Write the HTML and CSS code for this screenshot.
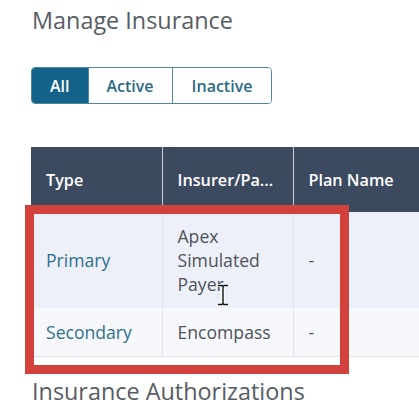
FILE: index.html
```html
<!DOCTYPE html>
<html>
<head>
<meta charset="utf-8">
<link rel="stylesheet" href="styles.css">
</head>
<body>
<div class="page">
  <h1 class="title">Manage Insurance</h1>
  <div class="toggle">
    <span class="seg seg-active">All</span>
    <span class="seg">Active</span>
    <span class="seg">Inactive</span>
  </div>
  <div class="table-wrap">
    <table class="grid">
      <thead>
        <tr>
          <th class="c1">Type</th>
          <th class="c2">Insurer/Pa...</th>
          <th class="c3">Plan Name</th>
        </tr>
      </thead>
      <tbody>
        <tr class="r1">
          <td class="link">Primary</td>
          <td>Apex<br>Simulated<br>Payer</td>
          <td>-</td>
        </tr>
        <tr class="r2">
          <td class="link">Secondary</td>
          <td>Encompass</td>
          <td>-</td>
        </tr>
      </tbody>
    </table>
    <div class="annot"></div>
    <svg class="cursor" width="14" height="22" viewBox="0 0 14 22">
      <path d="M2 1.5h4l1 1 1-1h4M7 2.5v17M2 20.5h4l1-1 1 1h4" fill="none" stroke="#fff" stroke-width="3.2"/>
      <path d="M2 1.5h4l1 1 1-1h4M7 2.5v17M2 20.5h4l1-1 1 1h4" fill="none" stroke="#111" stroke-width="1.4"/>
    </svg>
  </div>
  <h2 class="title sub">Insurance Authorizations</h2>
</div>
</body>
</html>
```
FILE: styles.css
```css
html, body {
  margin: 0;
  padding: 0;
  background: #ffffff;
  overflow: hidden;
}
.page {
  width: 419px;
  height: 415px;
  padding-left: 31px;
  box-sizing: border-box;
  font-family: "Open Sans", "Liberation Sans", sans-serif;
  overflow: hidden;
}
.title {
  margin: 0;
  padding-top: 4px;
  font-size: 23.4px;
  line-height: 32px;
  font-weight: 400;
  color: #575c64;
  padding-left: 1px;
}
.sub {
  padding-top: 0;
  margin-top: 18px;
}
.toggle {
  display: inline-flex;
  margin-top: 31px;
  border: 1px solid #4f87a1;
  border-radius: 4px;
  overflow: hidden;
  height: 37px;
  box-sizing: border-box;
}
.seg {
  display: flex;
  align-items: center;
  padding: 0 18px;
  font-size: 16px;
  font-weight: 600;
  color: #2c6a89;
  background: #fff;
  border-left: 1px solid #4f87a1;
}
.seg:first-child { border-left: none; }
.seg:last-child { padding: 0 19px; }
.seg-active {
  background: #13628a;
  color: #ffffff;
}
.table-wrap {
  position: relative;
  margin-top: 43px;
  width: 420px;
}
.grid {
  border-collapse: collapse;
  width: 420px;
  table-layout: fixed;
}
.c1 { width: 131px; }
.c2 { width: 131px; }
.grid th {
  height: 65px;
  padding: 0 15px;
  box-sizing: border-box;
  background: #3c4a5f;
  color: #ffffff;
  font-size: 16.2px;
  font-weight: 600;
  text-align: left;
  border-left: 1px solid #c9ced8;
  line-height: 24px;
}
.grid th:first-child { border-left: none; }
.grid td {
  padding: 12px 15px;
  font-size: 17.6px;
  line-height: 24px;
  color: #4d525a;
  border-left: 1px solid #e1e4ec;
  vertical-align: middle;
}
.grid td:first-child { border-left: none; }
.r1 td { background: #edf0f9; }
.r2 td { background: #f7f8fc; border-bottom: 1px solid #dfe2e8; }
.grid td.link { color: #2e6f8e; }
.annot {
  position: absolute;
  left: -6px;
  top: 58px;
  width: 324px;
  height: 169px;
  border: 9px solid #d2413c;
  box-sizing: border-box;
}
.cursor {
  position: absolute;
  left: 185px;
  top: 137px;
}
```
